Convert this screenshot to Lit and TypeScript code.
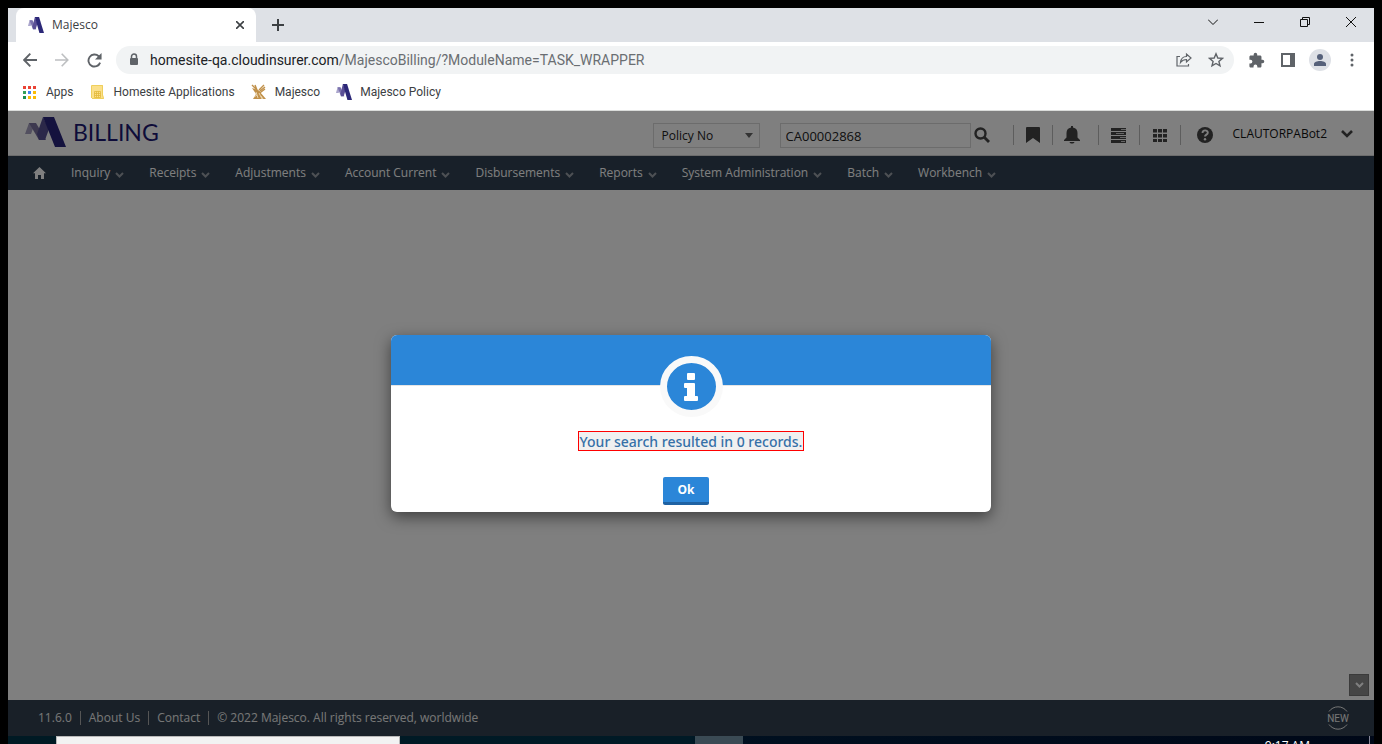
import { LitElement, html, css, svg } from "lit";
import { customElement, state } from "lit/decorators.js";

const chevron = html`<svg class="chev" viewBox="0 0 9 6" width="9" height="6" aria-hidden="true">
  <path d="M1 1l3.500 3.500L8 1" fill="none" stroke="currentColor" stroke-width="2" /></svg>`;

const favicon = html`<svg viewBox="0 0 42 30" width="16" height="16" preserveAspectRatio="none" aria-hidden="true">
  <path d="M0 17L4 6h7L7 17z" fill="#aaa5cc" />
  <path d="M4 6h8l10 17h-9z" fill="#7a71ac" />
  <path d="M12 18L18 0l7 12-5 11h-7z" fill="#5a4f96" />
  <path d="M18 0h11l13 30H30z" fill="#2c2878" /></svg>`;

const logo = html`<svg class="logo" viewBox="0 0 42 30" width="42" height="30" aria-hidden="true">
  <path d="M0 17L4 6h6L6 17z" fill="#a6a1c0" />
  <path d="M4 6h7l10 17h-7z" fill="#7a729f" />
  <path d="M12 17L18 0l6 12-4 11h-6z" fill="#565092" />
  <path d="M18 0h11l12 30H30z" fill="#28247c" /></svg>`;

const dots = ["#ea4335", "#ea4335", "#ea4335", "#34a05a", "#4285f4", "#fbbc05", "#1e8e4e", "#fbbc05", "#fbbc05"];

@customElement("browser-chrome")
class BrowserChrome extends LitElement {
  static styles = css`
    :host { display: block; background: #fff; font-family: "Open Sans", sans-serif; font-size: 12px; color: #3c4043; border-bottom: 1px solid #dadcda; }
    button { border: 0; background: none; padding: 0; color: inherit; display: grid; place-items: center; }
    svg { display: block; flex: none; }
    .tabs { display: flex; height: 34px; background: #dee1e6; padding-left: 8px; }
    .tab { display: flex; align-items: center; width: 240px; box-sizing: border-box; padding: 0 12px; gap: 8px; background: #fff; border-radius: 8px 8px 0 0; }
    .title { flex: 1; }
    .close { width: 8px; height: 16px; }
    .add { width: 44px; }
    .controls { display: flex; margin-left: auto; height: 28px; color: #111; }
    .controls button { width: 46px; }
    .toolbar { display: flex; align-items: center; height: 36px; padding: 0 6px; color: #5f6368; }
    .tool { width: 32px; height: 32px; }
    .faded { color: #bdbfc1; }
    .omni { flex: 1; display: flex; align-items: center; height: 28px; margin: 0 6px; padding: 0 2px 0 12px; background: #f1f3f4; border-radius: 14px; }
    .url { flex: 1; margin-left: 10px; font-family: Roboto, sans-serif; font-size: 14px; line-height: 20px; color: #6a6e72; }
    .host { color: #202124; }
    .avatar { display: grid; place-items: center; width: 22px; height: 22px; border-radius: 50%; background: #dee1e6; }
    .marks { display: flex; align-items: center; gap: 16px; height: 28px; padding: 0 14px 4px; font-family: Roboto, sans-serif; }
    .marks a { display: flex; align-items: center; gap: 8px; color: inherit; text-decoration: none; }
  `;
  render() {
    return html`
      <div class="tabs">
        <div class="tab">${favicon}<span class="title">Majesco</span>
          <button class="close" aria-label="Close tab"><svg width="8" height="8" viewBox="0 0 8 8"><path d="M0 0l8 8M8 0L0 8" stroke="#3c4043" stroke-width="1.600" /></svg></button>
        </div>
        <button class="add" aria-label="New tab"><svg width="12" height="12" viewBox="0 0 12 12"><path d="M6 0v12M0 6h12" stroke="#3c4043" stroke-width="2" /></svg></button>
        <div class="controls">
          <button aria-label="Search tabs"><svg width="10" height="6" viewBox="0 0 10 6"><path d="M0 .5l5 5 5-5" fill="none" stroke="currentColor" /></svg></button>
          <button aria-label="Minimize"><svg width="10" height="1" viewBox="0 0 10 1"><path d="M0 .5h10" stroke="currentColor" /></svg></button>
          <button aria-label="Restore"><svg width="10" height="10" viewBox="0 0 10 10"><path d="M.5 2.500h7v7h-7zM2.500 2.500v-2h7v7h-2" fill="none" stroke="currentColor" /></svg></button>
          <button aria-label="Close"><svg width="10" height="10" viewBox="0 0 10 10"><path d="M0 0l10 10M10 0L0 10" stroke="currentColor" /></svg></button>
        </div>
      </div>
      <div class="toolbar">
        <button class="tool" aria-label="Back"><svg width="14" height="14" viewBox="0 0 14 14"><path d="M14 7H1.500M7.300 .7L1.200 7l6.100 6.300" fill="none" stroke="currentColor" stroke-width="1.900" /></svg></button>
        <button class="tool faded" aria-label="Forward"><svg width="14" height="14" viewBox="0 0 14 14"><path d="M0 7h12.500M6.700 .7L12.800 7l-6.100 6.300" fill="none" stroke="currentColor" stroke-width="1.600" /></svg></button>
        <button class="tool" aria-label="Reload"><svg width="15" height="15" viewBox="0 0 16 16"><path d="M14 10.200A6.400 6.400 0 1 1 12.500 3.500L14 5" fill="none" stroke="currentColor" stroke-width="2" /><path d="M15.500 0v7h-7z" fill="currentColor" /></svg></button>
        <div class="omni">
          <svg width="12" height="14" viewBox="0 0 12 14"><path d="M3.500 5.500V3.500a2.500 2.500 0 0 1 5 0v2" fill="none" stroke="currentColor" stroke-width="1.500" /><rect x="2" y="5" width="8" height="7" rx="1" fill="currentColor" /></svg>
          <span class="url"><span class="host">homesite-qa.cloudinsurer.com</span>/MajescoBilling/?ModuleName=TASK_WRAPPER</span>
          <button class="tool" aria-label="Share"><svg width="16" height="16" viewBox="0 0 16 16"><path d="M4 4.500H1v9.500h11.500V12M4.500 10.500c.5-4 3-6 6-6V2l4.500 4-4.500 4V7.500c-3 0-4.500 1-6 3z" fill="none" stroke="currentColor" stroke-width="1.200" /></svg></button>
          <button class="tool" aria-label="Bookmark this page"><svg width="16" height="16" viewBox="0 0 16 16"><path d="M8 1.800l1.800 4.200 4.600.4-3.500 3 1.100 4.500L8 11.500l-4 2.400 1.100-4.500-3.500-3 4.600-.4z" fill="none" stroke="currentColor" stroke-width="1.400" /></svg></button>
        </div>
        <button class="tool" aria-label="Extensions"><svg width="17" height="17" viewBox="0 0 24 24"><path d="M20.500 11H19V7c0-1.100-.9-2-2-2h-4V3.500a2.500 2.500 0 0 0-5 0V5H4c-1.100 0-2 .9-2 2v3.800h1.500a2.700 2.700 0 0 1 0 5.400H2V20c0 1.100.9 2 2 2h3.800v-1.500a2.700 2.700 0 0 1 5.400 0V22H17c1.100 0 2-.9 2-2v-4h1.500a2.500 2.500 0 0 0 0-5z" fill="currentColor" /></svg></button>
        <button class="tool" aria-label="Side panel"><svg width="14" height="14" viewBox="0 0 14 14"><path d="M0 0h14v14H0zM2 2v10h7V2z" fill="currentColor" fill-rule="evenodd" /></svg></button>
        <button class="tool" aria-label="Profile"><span class="avatar"><svg width="12" height="12" viewBox="0 0 12 12" fill="#56617a"><circle cx="6" cy="3" r="3" /><path d="M0 12v-2c0-4 12-4 12 0v2z" /></svg></span></button>
        <button class="tool" aria-label="Menu"><svg width="4" height="14" viewBox="0 0 4 14" fill="currentColor"><circle cx="2" cy="2" r="1.500" /><circle cx="2" cy="7" r="1.500" /><circle cx="2" cy="12" r="1.500" /></svg></button>
      </div>
      <nav class="marks" aria-label="Bookmarks">
        <a href="#"><svg width="16" height="15" viewBox="0 0 16 15">${dots.map((c, i) => svg`<rect x=${1 + (i % 3) * 5} y=${1 + Math.floor(i / 3) * 5} width="3" height="3" fill=${c} />`)}</svg>Apps</a>
        <a href="#"><svg width="16" height="16" viewBox="0 0 16 16"><path d="M2 1h11v10l1 4H3a1 1 0 0 1-1-1z" fill="#fbe08a" /><path d="M4.500 7.500h6v6h-6zM4.500 9.500h6M4.500 11.500h6M6.500 7.500v6M8.500 7.500v6" fill="none" stroke="#e3b93a" stroke-width=".8" /><path d="M1.500 14V1.500h11V11l1 3.500H2" fill="none" stroke="#efcf5c" /></svg>Homesite Applications</a>
        <a href="#"><svg width="16" height="16" viewBox="0 0 16 16"><path d="M1 1l4 4v3l3 4M4 1l2 5 4 3M8 6l5-5M9 7l5-4M10 8l4-3" fill="none" stroke="#c1914a" stroke-width="1.400" /><path d="M1 4l3 1 5 3 6 7H2l3-5z" fill="#c1914a" /><path d="M5 8l2 6M8 9l3 6M3 13l3-2M10 12l2 3" stroke="#f3e4ca" stroke-width=".8" /></svg>Majesco</a>
        <a href="#">${favicon}Majesco Policy</a>
      </nav>`;
  }
}

@customElement("app-root")
class AppRoot extends LitElement {
  @state() private open = true;

  private menus = ["Inquiry", "Receipts", "Adjustments", "Account Current", "Disbursements", "Reports", "System Administration", "Batch", "Workbench"];

  static styles = css`
    :host { display: flex; flex-direction: column; height: 100vh; box-sizing: border-box; padding: 8px 8px 0; background: #000; overflow: hidden; font-family: "Open Sans", sans-serif; font-size: 12px; line-height: 18px; }
    button { border: 0; padding: 0; background: none; color: inherit; font: inherit; }
    svg { display: block; flex: none; }
    a { color: inherit; text-decoration: none; }
    .app { position: relative; flex: 1; display: flex; flex-direction: column; min-height: 0; background: #fff; }
    .header { display: flex; align-items: center; height: 44px; border-bottom: 1px solid #d8d8d8; padding: 0 16px; color: #111; }
    .brand { display: flex; align-items: center; gap: 6px; font: 23px/30px Lato, sans-serif; color: #1c1873; margin-right: auto; padding: 0 0 2px 1px; }
    .pick { display: grid; align-items: center; width: 107px; margin: 5px 20px 0 0; }
    .pick > * { grid-area: 1 / 1; }
    .pick svg { justify-self: end; margin-right: 7px; color: #666; pointer-events: none; }
    select, input { box-sizing: border-box; height: 25px; border: 1px solid #d8d8d8; border-radius: 0; background: transparent; color: #222; font: 13px/18px "Open Sans", sans-serif; margin: 0; outline: 0; }
    select { appearance: none; width: 100%; padding: 0 8px; font-size: 12px; }
    input { width: 191px; padding: 0 5px; margin-top: 5px; }
    .find { padding: 4px 0 0 3px; margin-right: 23px; }
    .cell { display: grid; align-items: center; justify-items: center; width: 41px; height: 20px; box-sizing: border-box; border-left: 1px solid #bbb; margin-top: 4px; color: #444; }
    .mark { width: 39px; }
    .bell { width: 46px; padding-right: 6px; }
    .help { width: 49px; }
    .user { display: flex; align-items: center; gap: 14px; padding: 1px 5px 0 4px; }
    .nav { display: flex; align-items: center; gap: 25px; height: 34px; background: #304152; color: #fff; padding: 0 25px; }
    .nav a { display: flex; align-items: center; gap: 5px; }
    .chev { color: #9aa0a8; margin-top: 3px; }
    .page { flex: 1; display: flex; align-items: flex-end; justify-content: flex-end; padding: 0 5px 4px; }
    .down { display: grid; place-items: center; width: 20px; height: 22px; border: 1px solid #777; background: #8c8c8c; box-sizing: border-box; }
    .down .chev { color: #fff; margin: 0; }
    .footer { display: flex; align-items: center; height: 36px; background: #324150; color: #eee; padding: 0 24px 0 22px; }
    .footer > span, .footer > a { padding: 0 8px; line-height: 14px; }
    .footer > * + a, .footer > a + span { border-left: 1px solid #aaa; }
    .new { margin-left: auto; }
    .veil { position: absolute; inset: 0; display: grid; place-items: center; background: rgba(0, 0, 0, 0.5); }
    .dialog { width: 600px; max-width: 90%; background: #fff; border-radius: 6px; box-shadow: 0 5px 15px rgba(0, 0, 0, 0.5); display: flex; flex-direction: column; align-items: center; padding-bottom: 7px; }
    .top { align-self: stretch; display: flex; justify-content: center; height: 50px; background: #2b86d8; background-clip: padding-box; border-radius: 6px 6px 0 0; border-bottom: 1px solid #e5e5e5; }
    .badge { width: 63px; height: 61px; box-sizing: border-box; margin-top: 21px; border: 7px solid #f9f9f9; border-radius: 50%; background: #2b86d8; display: grid; place-items: center; }
    .msg { margin: 45px 0 26px; padding: 1px 1px 0; height: 20px; box-sizing: border-box; border: 1px solid #f00; background: #f0f0f0; color: #3670a8; font: 500 14px/18px "Noto Sans", sans-serif; }
    .ok { width: 46px; height: 28px; margin-right: 10px; border-bottom: 3px solid #1f62a3; border-radius: 2px; background: #2b86d8; color: #fff; font-weight: 700; line-height: 25px; }
    .taskbar { display: flex; height: 8px; overflow: hidden; background: linear-gradient(90deg, #001a24, #001a26 50%, #001020 51%, #000818); color: #fff; }
    .box { width: 344px; margin-left: 48px; box-sizing: border-box; border: 1px solid #b8b8b8; border-bottom: 0; background: #f2f2f2; }
    .task { width: 48px; margin-left: 295px; background: #3a4a54; }
    .clock { margin-left: auto; padding-right: 59px; line-height: 20px; margin-right: 4px; border-right: 1px solid #889; }
  `;

  render() {
    return html`
      <browser-chrome></browser-chrome>
      <div class="app">
        <header class="header">
          <div class="brand">${logo}<span>BILLING</span></div>
          <label class="pick"><select aria-label="Search by"><option>Policy No</option></select>
            <svg width="8" height="5" viewBox="0 0 8 5"><path d="M0 0h8L4 5z" fill="currentColor" /></svg></label>
          <input aria-label="Search value" value="CA00002868" />
          <button class="find" aria-label="Search"><svg width="16" height="16" viewBox="0 0 16 16"><circle cx="6.500" cy="6.500" r="5" fill="none" stroke="#444" stroke-width="2.400" /><path d="M10 10l5 5" stroke="#444" stroke-width="2.800" /></svg></button>
          <button class="cell mark" aria-label="Bookmarks"><svg width="14" height="16" viewBox="0 0 14 16"><path d="M0 1a1 1 0 0 1 1-1h12a1 1 0 0 1 1 1v15l-7-5-7 5z" fill="currentColor" /></svg></button>
          <button class="cell bell" aria-label="Notifications"><svg width="16" height="18" viewBox="0 0 16 18"><path d="M7 0h2v1.500c3 .5 4.500 2.500 4.500 5.500v4.500L16 14v1H0v-1l2.500-2.500V7c0-3 1.500-5 4.500-5.500zM5.500 16h5c-.5 2-4.500 2-5 0z" fill="currentColor" /></svg></button>
          <button class="cell" aria-label="Tasks"><svg width="15" height="15" viewBox="0 0 15 15"><path d="M0 1.500h15M0 5.500h15M0 9.500h15M0 13.500h15" stroke="currentColor" stroke-width="3" /><path d="M10 1.500h5M5 5.500h8M9 9.500h6M10 13.500h4" stroke="#ccc" stroke-width="1" /></svg></button>
          <button class="cell" aria-label="Modules"><svg width="14" height="13" viewBox="0 0 14 13" fill="currentColor">${[0, 5, 10].map((y) => [0, 5, 10].map((x) => svg`<rect x=${x} y=${y} width="4" height="3.500" />`))}</svg></button>
          <button class="cell help" aria-label="Help"><svg width="16" height="16" viewBox="0 0 16 16"><circle cx="8" cy="8" r="8" fill="currentColor" /><path d="M5.500 6c0-3.500 5.300-3.300 5.300-.3C10.800 7.700 8 7.600 8 9.600" fill="none" stroke="#fff" stroke-width="1.900" /><circle cx="8" cy="12.200" r="1.200" fill="#fff" /></svg></button>
          <button class="user"><span>CLAUTORPABot2</span><svg width="12" height="8" viewBox="0 0 12 8"><path d="M1 1l5 5 5-5" fill="none" stroke="#444" stroke-width="2.600" /></svg></button>
        </header>
        <nav class="nav" aria-label="Main">
          <a href="#" aria-label="Home"><svg width="13" height="12" viewBox="0 0 13 12"><path d="M6.500 0L13 6.300h-2V12H8V8H5v4H2V6.300H0z" fill="#fff" /></svg></a>
          ${this.menus.map((m) => html`<a href="#">${m}${chevron}</a>`)}
        </nav>
        <main class="page"><button class="down" aria-label="Scroll down">${chevron}</button></main>
        <footer class="footer">
          <span>11.6.0</span><a href="#">About Us</a><a href="#">Contact</a><span>© 2022 Majesco. All rights reserved, worldwide</span>
          <svg class="new" width="24" height="24" viewBox="0 0 24 24"><path d="M3 5.500a11 11 0 0 1 18 0M3 18.500a11 11 0 0 0 18 0" fill="none" stroke="#eee" /><text x="12" y="16" text-anchor="middle" font-family="Roboto" font-size="10" fill="#eee">NEW</text></svg>
        </footer>
        ${this.open
          ? html`<div class="veil"><section class="dialog" role="alertdialog" aria-modal="true" aria-labelledby="msg">
              <div class="top"><div class="badge"><svg width="14" height="28" viewBox="0 0 14 28"><path d="M4 0h6a1 1 0 0 1 1 1v5a1 1 0 0 1-1 1H4a1 1 0 0 1-1-1V1a1 1 0 0 1 1-1zM1 10h9a1 1 0 0 1 1 1v12h2a1 1 0 0 1 1 1v3a1 1 0 0 1-1 1H1a1 1 0 0 1-1-1v-3a1 1 0 0 1 1-1h2v-8H1a1 1 0 0 1-1-1v-3a1 1 0 0 1 1-1z" fill="#fff" /></svg></div></div>
              <p class="msg" id="msg">Your search resulted in 0 records.</p>
              <button class="ok" @click=${() => (this.open = false)}>Ok</button>
            </section></div>`
          : ""}
      </div>
      <div class="taskbar"><div class="box"></div><div class="task"></div><span class="clock">9:17 AM</span></div>`;
  }
}
